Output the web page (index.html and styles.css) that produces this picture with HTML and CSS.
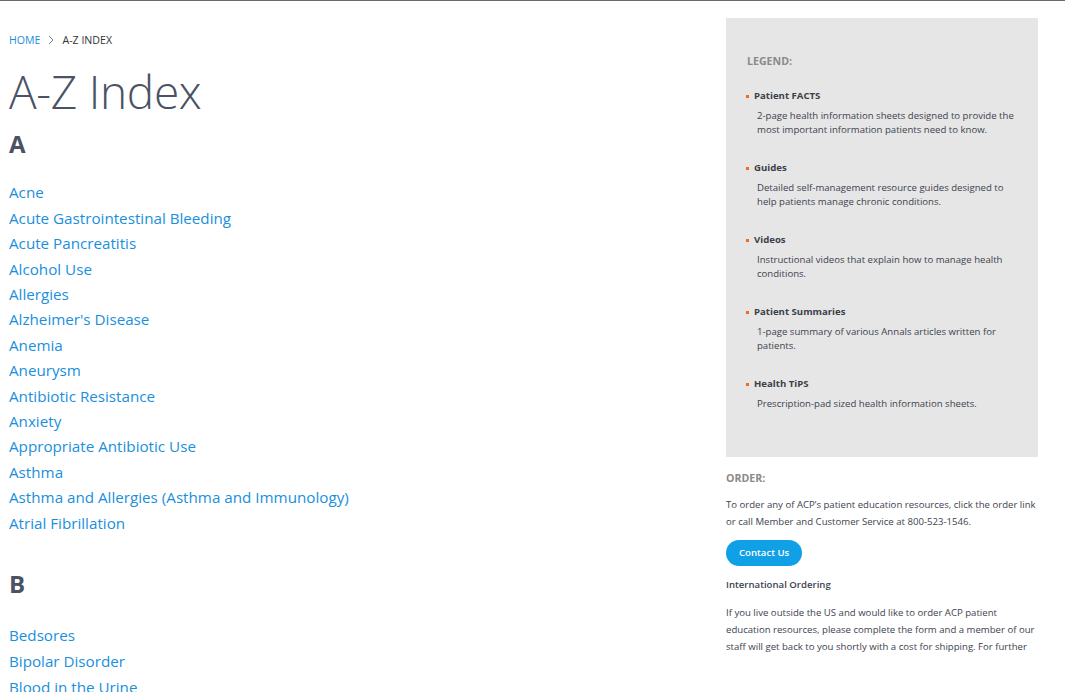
FILE: index.html
```html
<!DOCTYPE html>
<html lang="en">
<head>
<meta charset="utf-8">
<title>A-Z Index</title>
<link rel="stylesheet" href="styles.css">
</head>
<body>
<div class="page">
  <main class="main">
    <nav class="crumbs">
      <a href="#" class="crumb-link">HOME</a>
      <svg class="crumb-sep" width="8" height="10" viewBox="0 0 8 10"><path d="M2 1l4 4-4 4" fill="none" stroke="#777" stroke-width="1"/></svg>
      <span class="crumb-current">A-Z INDEX</span>
    </nav>
    <h1 class="title">A-Z Index</h1>
    <section class="letter-group">
      <h2 class="letter">A</h2>
      <ul class="topics">
        <li><a href="#">Acne</a></li>
        <li><a href="#">Acute Gastrointestinal Bleeding</a></li>
        <li><a href="#">Acute Pancreatitis</a></li>
        <li><a href="#">Alcohol Use</a></li>
        <li><a href="#">Allergies</a></li>
        <li><a href="#">Alzheimer's Disease</a></li>
        <li><a href="#">Anemia</a></li>
        <li><a href="#">Aneurysm</a></li>
        <li><a href="#">Antibiotic Resistance</a></li>
        <li><a href="#">Anxiety</a></li>
        <li><a href="#">Appropriate Antibiotic Use</a></li>
        <li><a href="#">Asthma</a></li>
        <li><a href="#">Asthma and Allergies (Asthma and Immunology)</a></li>
        <li><a href="#">Atrial Fibrillation</a></li>
      </ul>
    </section>
    <section class="letter-group letter-group-b">
      <h2 class="letter">B</h2>
      <ul class="topics">
        <li><a href="#">Bedsores</a></li>
        <li><a href="#">Bipolar Disorder</a></li>
        <li><a href="#">Blood in the Urine</a></li>
      </ul>
    </section>
  </main>
  <aside class="side">
    <div class="legend">
      <h3 class="legend-title">LEGEND:</h3>
      <ul class="legend-list">
        <li class="legend-item">
          <div class="legend-name">Patient FACTS</div>
          <p class="legend-desc">2-page health information sheets designed to provide the most important information patients need to know.</p>
        </li>
        <li class="legend-item">
          <div class="legend-name">Guides</div>
          <p class="legend-desc">Detailed self-management resource guides designed to help patients manage chronic conditions.</p>
        </li>
        <li class="legend-item">
          <div class="legend-name">Videos</div>
          <p class="legend-desc">Instructional videos that explain how to manage health conditions.</p>
        </li>
        <li class="legend-item">
          <div class="legend-name">Patient Summaries</div>
          <p class="legend-desc">1-page summary of various Annals articles written for patients.</p>
        </li>
        <li class="legend-item">
          <div class="legend-name">Health TiPS</div>
          <p class="legend-desc">Prescription-pad sized health information sheets.</p>
        </li>
      </ul>
    </div>
    <div class="order">
      <h3 class="order-title">ORDER:</h3>
      <p class="order-text">To order any of ACP’s patient education resources, click the order link or call Member and Customer Service at 800-523-1546.</p>
      <a href="#" class="btn">Contact Us</a>
      <h4 class="intl-title">International Ordering</h4>
      <p class="intl-text">If you live outside the US and would like to order ACP patient education resources, please complete the form and a member of our staff will get back to you shortly with a cost for shipping. For further</p>
    </div>
  </aside>
</div>
</body>
</html>
```

FILE: styles.css
```css
html, body {
  margin: 0;
  padding: 0;
  background: #fff;
}
body {
  border-top: 1px solid #676b6a;
  font-family: "Open Sans", "Liberation Sans", sans-serif;
  color: #3d4350;
  overflow: hidden;
  height: 691px;
}
.page {
  display: flex;
  align-items: flex-start;
}
.main {
  width: 726px;
  flex: none;
  padding-left: 9px;
  box-sizing: border-box;
}
.crumbs {
  display: flex;
  align-items: center;
  gap: 7px;
  margin-top: 32px;
  font-size: 10.6px;
  line-height: 14px;
}
.crumb-link {
  color: #1a8fdc;
  text-decoration: none;
}
.crumb-current {
  color: #333;
}
.title {
  margin: 16px 0 0;
  font-size: 46px;
  font-weight: 300;
  line-height: 56px;
  color: #4a5264;
  letter-spacing: -0.3px;
}
.letter {
  margin: 10px 0 0;
  font-size: 24px;
  font-weight: 700;
  line-height: 30px;
  color: #4a5264;
}
.topics {
  list-style: none;
  margin: 0;
  padding: 0;
}
.letter-group .topics {
  margin-top: 21.4px;
}
.topics li {
  font-size: 15.2px;
  line-height: 25.4px;
  white-space: nowrap;
}
.topics a {
  color: #1a8fdc;
  text-decoration: none;
}
.letter-group-b {
  margin-top: 32.7px;
}
.letter-group-b .letter {
  margin-top: 0;
}
.letter-group-b .topics {
  margin-top: 23.7px;
}
.letter-group-b .topics li {
  line-height: 26px;
}
.side {
  width: 312px;
  flex: none;
  margin-top: 17px;
}
.legend {
  background: #e6e6e6;
  height: 439px;
  padding: 36px 14px 0 20px;
  box-sizing: border-box;
}
.legend-title {
  margin: 0 0 0 1px;
  font-size: 10.6px;
  font-weight: 700;
  line-height: 14px;
  color: #8a8a8a;
}
.legend-list {
  list-style: none;
  margin: 21px 0 0;
  padding: 0;
}
.legend-item {
  height: 72px;
}
.legend-name {
  position: relative;
  padding-left: 8px;
  font-size: 9.6px;
  font-weight: 700;
  line-height: 14px;
  color: #3a3f48;
}
.legend-name::before {
  content: "";
  position: absolute;
  left: 0;
  top: 6px;
  width: 3px;
  height: 3px;
  background: #f26b1d;
}
.legend-desc {
  margin: 6px 0 0 11px;
  font-size: 9.6px;
  line-height: 14px;
  color: #3d4350;
}
.order {
  padding-top: 14px;
  width: 320px;
}
.order-title {
  margin: 0;
  font-size: 10.6px;
  font-weight: 700;
  line-height: 14px;
  color: #8a8a8a;
}
.order-text {
  margin: 12px 0 0;
  font-size: 9.6px;
  line-height: 16.5px;
  color: #3d4350;
  width: 316px;
}
.btn {
  display: inline-block;
  margin-top: 10px;
  height: 26px;
  line-height: 26px;
  padding: 0 13px;
  border-radius: 13px;
  background: #0fa0e6;
  color: #fff;
  font-size: 9.6px;
  font-weight: 600;
  text-decoration: none;
}
.intl-title {
  margin: 11px 0 0;
  font-size: 9.6px;
  font-weight: 600;
  line-height: 16px;
  color: #3d4350;
}
.intl-text {
  margin: 11px 0 0;
  font-size: 9.6px;
  line-height: 17px;
  color: #3d4350;
  width: 312px;
}
```
